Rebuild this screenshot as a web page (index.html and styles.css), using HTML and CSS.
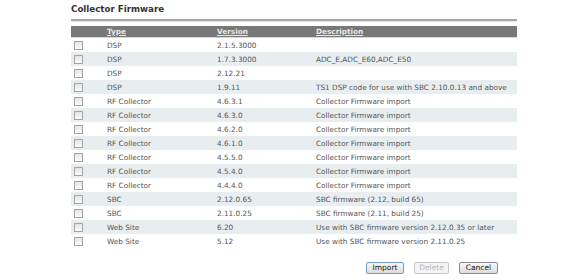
FILE: index.html
```html
<!DOCTYPE html>
<html lang="en">
<head>
    <meta charset="UTF-8">
    <title>Collector Firmware</title>
    <link rel="stylesheet" href="styles.css">
</head>
<body>
<div class="panel">
    <h2 class="title">Collector Firmware</h2>
    <table class="fwtable">
        <thead>
            <tr>
                <th class="chk"></th>
                <th class="type"><a href="#">Type</a></th>
                <th class="ver"><a href="#">Version</a></th>
                <th><a href="#">Description</a></th>
            </tr>
        </thead>
        <tbody>
            <tr><td class="chk"><input type="checkbox"></td><td>DSP</td><td>2.1.5.3000</td><td></td></tr>
            <tr><td class="chk"><input type="checkbox"></td><td>DSP</td><td>1.7.3.3000</td><td>ADC_E,ADC_E60,ADC_E50</td></tr>
            <tr><td class="chk"><input type="checkbox"></td><td>DSP</td><td>2.12.21</td><td></td></tr>
            <tr><td class="chk"><input type="checkbox"></td><td>DSP</td><td>1.9.11</td><td>TS1 DSP code for use with SBC 2.10.0.13 and above</td></tr>
            <tr><td class="chk"><input type="checkbox"></td><td>RF Collector</td><td>4.6.3.1</td><td>Collector Firmware import</td></tr>
            <tr><td class="chk"><input type="checkbox"></td><td>RF Collector</td><td>4.6.3.0</td><td>Collector Firmware import</td></tr>
            <tr><td class="chk"><input type="checkbox"></td><td>RF Collector</td><td>4.6.2.0</td><td>Collector Firmware import</td></tr>
            <tr><td class="chk"><input type="checkbox"></td><td>RF Collector</td><td>4.6.1.0</td><td>Collector Firmware import</td></tr>
            <tr><td class="chk"><input type="checkbox"></td><td>RF Collector</td><td>4.5.5.0</td><td>Collector Firmware import</td></tr>
            <tr><td class="chk"><input type="checkbox"></td><td>RF Collector</td><td>4.5.4.0</td><td>Collector Firmware import</td></tr>
            <tr><td class="chk"><input type="checkbox"></td><td>RF Collector</td><td>4.4.4.0</td><td>Collector Firmware import</td></tr>
            <tr><td class="chk"><input type="checkbox"></td><td>SBC</td><td>2.12.0.65</td><td>SBC firmware (2.12, build 65)</td></tr>
            <tr><td class="chk"><input type="checkbox"></td><td>SBC</td><td>2.11.0.25</td><td>SBC firmware (2.11, build 25)</td></tr>
            <tr><td class="chk"><input type="checkbox"></td><td>Web Site</td><td>6.20</td><td>Use with SBC firmware version 2.12.0.35 or later</td></tr>
            <tr><td class="chk"><input type="checkbox"></td><td>Web Site</td><td>5.12</td><td>Use with SBC firmware version 2.11.0.25</td></tr>
        </tbody>
    </table>
    <div class="buttons">
        <button class="btn focus">Import</button>
        <button class="btn" disabled>Delete</button>
        <button class="btn cancel">Cancel</button>
    </div>
</div>
</body>
</html>
```

FILE: styles.css
```css
body {
    margin: 0;
    background-color: #fff;
    font-family: "DejaVu Sans", Verdana, sans-serif;
    font-size: 7.3px;
    color: #555;
}

.panel {
    width: 446px;
    margin-left: 71px;
    padding-top: 4px;
}

.title {
    margin: 0;
    font-size: 8.7px;
    font-weight: bold;
    color: #333;
    height: 15px;
    border-bottom: 2px solid #a8a8a8;
    box-shadow: 0 1px 0 #e4e4e4;
}

.fwtable {
    width: 100%;
    margin-top: 5px;
    border-collapse: collapse;
}

.fwtable th {
    background-color: #787878;
    height: 11px;
    padding: 0;
    text-align: left;
    font-weight: bold;
    font-size: 7.3px;
    border-bottom: 1px solid #d8d8d8;
}

.fwtable th a {
    color: #e8e8e8;
    text-decoration: underline;
}

.fwtable td {
    height: 14px;
    padding: 0;
    vertical-align: middle;
}

.fwtable tbody tr:nth-child(even) td {
    background-color: #e8eef0;
}

.fwtable .chk {
    width: 33px;
    padding-left: 3px;
}

.fwtable .type {
    width: 110px;
}

.fwtable .ver {
    width: 99px;
}

.fwtable input {
    appearance: none;
    display: block;
    width: 9px;
    height: 9px;
    margin: 0;
    border: 1px solid #a5a5a5;
    background: linear-gradient(#e4e4e4, #fafafa);
}

.buttons {
    display: flex;
    justify-content: flex-end;
    gap: 10px;
    margin-top: 14px;
    padding-right: 19px;
}

.btn {
    font-family: "DejaVu Sans", Verdana, sans-serif;
    font-size: 7.5px;
    height: 12px;
    padding: 0;
    border: 1px solid #8a8a8a;
    border-radius: 2px;
    background: linear-gradient(#f8f8f8, #dcdcdc);
    color: #111;
    line-height: 10px;
}

.btn.focus {
    border-color: #6f9ccc;
    width: 38px;
}

.btn:disabled {
    color: #b8b8b8;
    border-color: #c8c8c8;
    background: #f4f4f4;
    width: 35px;
}

.btn.cancel {
    width: 39px;
}
```
